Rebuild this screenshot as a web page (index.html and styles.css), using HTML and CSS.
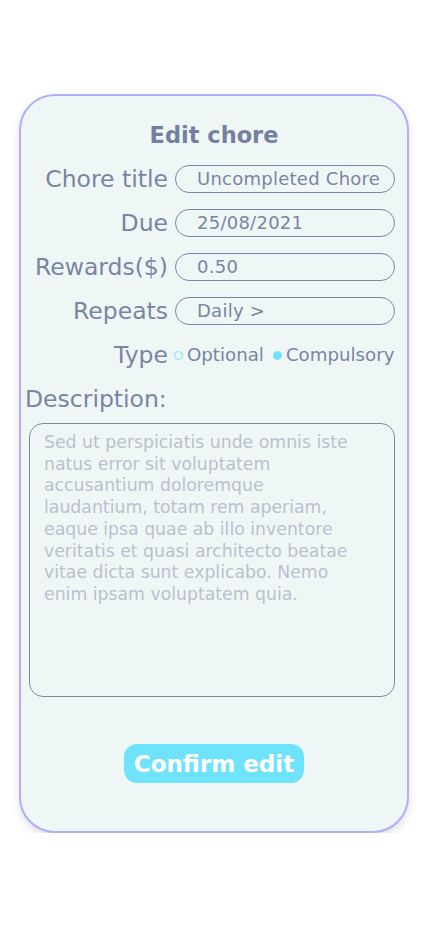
FILE: index.html
```html
<!DOCTYPE html>
<html>
<head>
<meta charset="utf-8">
<link rel="stylesheet" href="styles.css">
</head>
<body>
<div class="card">
  <h1 class="title">Edit chore</h1>
  <div class="form">
    <div class="label">Chore title</div>
    <div class="field">Uncompleted Chore</div>
    <div class="label">Due</div>
    <div class="field">25/08/2021</div>
    <div class="label">Rewards($)</div>
    <div class="field">0.50</div>
    <div class="label">Repeats</div>
    <div class="field">Daily &gt;</div>
    <div class="label">Type</div>
    <div class="options">
      <span class="radio"></span><span class="opt">Optional</span>
      <span class="radio on"></span><span class="opt">Compulsory</span>
    </div>
  </div>
  <div class="desc-label">Description:</div>
  <div class="desc">Sed ut perspiciatis unde omnis iste<br>natus error sit voluptatem<br>accusantium doloremque<br>laudantium, totam rem aperiam,<br>eaque ipsa quae ab illo inventore<br>veritatis et quasi architecto beatae<br>vitae dicta sunt explicabo. Nemo<br>enim ipsam voluptatem quia.</div>
  <div class="actions">
    <button class="confirm">Confirm edit</button>
  </div>
</div>
</body>
</html>
```
FILE: styles.css
```css
html, body {
  margin: 0;
  padding: 0;
  background: #ffffff;
}
body {
  font-family: "DejaVu Sans", "Noto Sans", sans-serif;
  color: #7a84a3;
  padding: 94px 0 0 19px;
}
.card {
  box-sizing: border-box;
  width: 390px;
  height: 739px;
  border: 2px solid #b2aef8;
  border-radius: 36px;
  background: #eff7f6;
  box-shadow: 0 4px 10px rgba(0,0,0,0.12);
  padding: 25px 11px 0 0;
  display: flex;
  flex-direction: column;
}
.title {
  margin: 0 0 16px 0;
  text-align: center;
  font-size: 22.5px;
  line-height: 28px;
  font-weight: bold;
  color: #7480a0;
  padding-left: 11px;
}
.form {
  display: grid;
  grid-template-columns: 147px 220px;
  column-gap: 7px;
  row-gap: 16px;
}
.label {
  text-align: right;
  font-size: 23.5px;
  line-height: 28px;
  white-space: nowrap;
}
.field {
  box-sizing: border-box;
  height: 28px;
  border: 1px solid #7a86ad;
  border-radius: 14px;
  padding-left: 21px;
  font-size: 18px;
  letter-spacing: 0.25px;
  line-height: 26px;
  white-space: nowrap;
}
.options {
  display: flex;
  align-items: center;
  font-size: 18.2px;
  line-height: 28px;
  white-space: nowrap;
  margin-left: -1px;
  margin-right: -4px;
}
.radio {
  flex-shrink: 0;
  box-sizing: border-box;
  width: 9px;
  height: 9px;
  border: 1px solid #70e2fb;
  border-radius: 50%;
  margin-right: 4px;
}
.radio.on {
  background: #70e2fb;
  margin-left: 9px;
}
.desc-label {
  margin-top: 16px;
  padding-left: 4px;
  font-size: 23.5px;
  line-height: 28px;
}
.desc {
  box-sizing: border-box;
  margin: 10px 0 0 8px;
  width: 366px;
  height: 274px;
  border: 1px solid #7a86ad;
  border-radius: 14px;
  padding: 8px 6px 0 14px;
  font-size: 17.3px;
  line-height: 21.7px;
  color: #bac0d0;
  white-space: nowrap;
}
.actions {
  display: flex;
  justify-content: center;
  padding-left: 11px;
  margin-top: 47px;
}
.confirm {
  width: 180px;
  height: 39px;
  border: none;
  border-radius: 13px;
  background: #70e3fc;
  color: #ffffff;
  font-family: "DejaVu Sans", sans-serif;
  font-weight: bold;
  font-size: 23px;
  padding: 0;
}
```
